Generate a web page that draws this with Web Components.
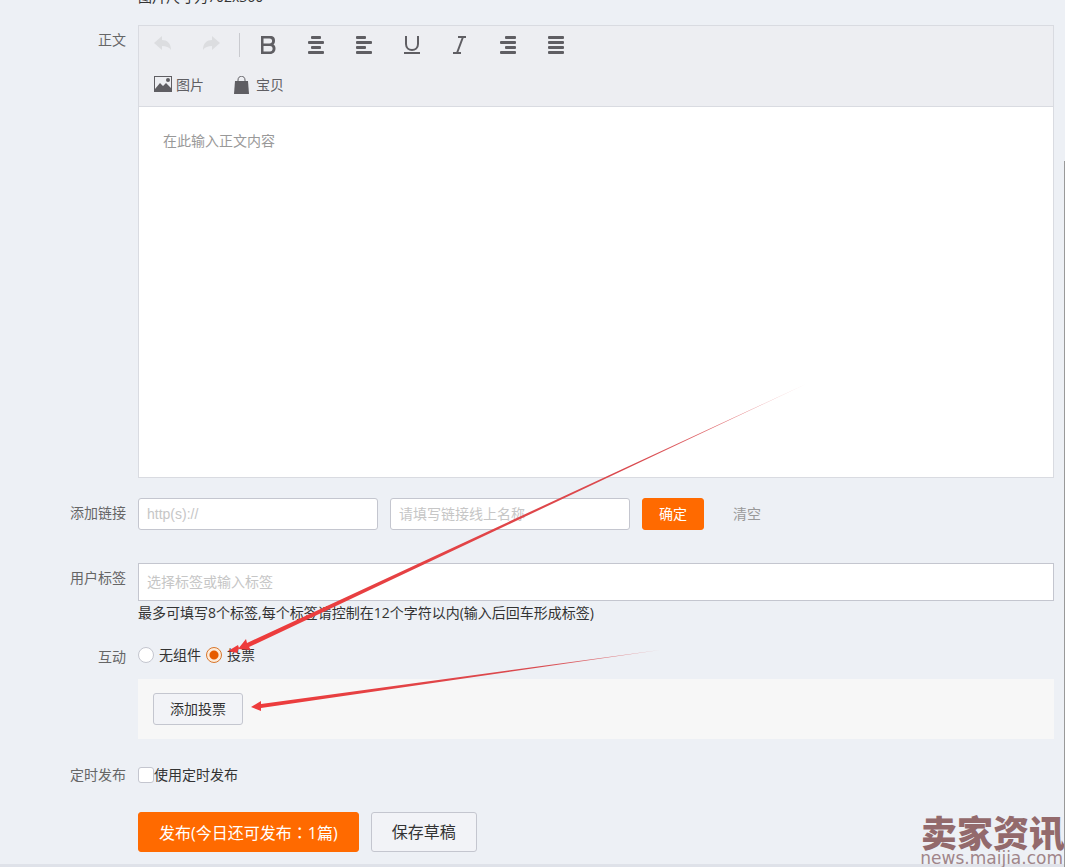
<!DOCTYPE html>
<html lang="zh-CN">
<head>
<meta charset="utf-8">
<title>发布文章</title>
<style>
html, body { margin: 0; min-height: 100%; }
body { background: #edf0f5; overflow: hidden; position: relative; color: #333; font: 14px/20px "Open Sans", "Noto Sans CJK SC", sans-serif; }
</style>
</head>
<body>
<publish-page></publish-page>
<script>
const define = (name, html, setup) => {
  const template = document.createElement('template');
  template.innerHTML = html;
  customElements.define(name, class extends HTMLElement {
    constructor() {
      super();
      this.attachShadow({ mode: 'open' }).append(template.content.cloneNode(true));
    }
    connectedCallback() { if (setup) setup(this, this.shadowRoot); }
  });
};

define('form-row', `
<style>
:host { display: grid; grid-template-columns: 126px minmax(0, 1fr); column-gap: 12px; align-items: start; }
.label { text-align: right; color: #666; padding-top: var(--label-top, 5px); }
</style>
<div class="label"></div>
<div><slot></slot></div>`, (host, root) => {
  root.querySelector('.label').textContent = host.getAttribute('label') || '';
});

const bars = rows => rows.map(([x, w], i) => `<rect x="${x}" y="${i * 5}" width="${w}" height="3" rx="1"/>`).join('');
const icons = {
  undo: '<path d="M0 7 8 0v4c5 0 9 3 9 10-2-3-5-4-9-4v4z"/>',
  redo: '<path d="M18 7 10 0v4c-5 0-9 3-9 10 2-3 5-4 9-4v4z"/>',
  bold: '<path fill-rule="evenodd" d="M2 0h9c4 0 5 2 5 4.500 0 2-.5 3-1.500 4 1.500 1 2 2 2 4 0 3-2 5.500-5.500 5.500H2zM4.500 2.500v5h6c3.500 0 3.500-5 0-5zM4.500 10v5.500h6.500c3.500 0 3.500-5.500 0-5.500z"/>',
  center: bars([[4, 10], [1, 16], [4, 10], [1, 16]]),
  left: bars([[1, 10], [1, 16], [1, 10], [1, 16]]),
  underline: '<path d="M3 0v8c0 8 12 8 12 0V0" fill="none" stroke="currentColor" stroke-width="2"/><rect x="1" y="16" width="16" height="2"/>',
  italic: '<path d="M7 1h8M2 17h8M12 1 6 17" fill="none" stroke="currentColor" stroke-width="2"/>',
  right: bars([[6, 11], [1, 16], [6, 11], [1, 16]]),
  justify: bars([[1, 16], [1, 16], [1, 16], [1, 16]]),
  image: '<path fill-rule="evenodd" d="M0 0h18v16H0zM1 1v12l5-6 3 3 3-3 5 5V1z"/><circle cx="14" cy="4" r="2"/>',
  bag: '<path d="M1 5h13l1 13H0z"/><path d="M4 7V4c0-5 7-5 7 0v3" fill="none" stroke="currentColor"/>'
};

define('tool-button', `
<style>
:host { display: block; }
button { display: flex; align-items: center; gap: 4px; border: 0; padding: 0; background: none; color: #5f5e63; font: inherit; }
button:disabled { color: #dcdde0; }
svg { width: 18px; height: 18px; fill: currentColor; display: block; }
</style>
<button type="button"><svg viewBox="0 0 18 18" aria-hidden="true"></svg><slot></slot></button>`, (host, root) => {
  root.querySelector('svg').innerHTML = icons[host.getAttribute('icon')];
  const button = root.querySelector('button');
  button.disabled = host.hasAttribute('disabled');
  if (host.title) button.setAttribute('aria-label', host.title);
});

define('rich-editor', `
<style>
:host { display: block; border: 1px solid #d9dbe1; background: #fff; }
.tools { background: #edeef2; border-bottom: 1px solid #d9dbe1; padding: 9px 15px 11px; display: flex; flex-direction: column; gap: 20px; }
.line { display: flex; align-items: center; height: 20px; gap: 30px; }
.sep { width: 1px; height: 24px; background: #c9cacf; margin: 0 -11px; }
textarea { display: block; box-sizing: border-box; width: 100%; height: 370px; border: 0; padding: 24px; resize: none; outline: 0; background: none; font: inherit; color: #333; }
textarea::placeholder { color: #999; opacity: 1; }
</style>
<div class="tools">
  <div class="line">
    <tool-button icon="undo" title="撤销" disabled></tool-button>
    <tool-button icon="redo" title="重做" disabled></tool-button>
    <span class="sep"></span>
    <tool-button icon="bold" title="加粗"></tool-button>
    <tool-button icon="center" title="居中"></tool-button>
    <tool-button icon="left" title="左对齐"></tool-button>
    <tool-button icon="underline" title="下划线"></tool-button>
    <tool-button icon="italic" title="斜体"></tool-button>
    <tool-button icon="right" title="右对齐"></tool-button>
    <tool-button icon="justify" title="两端对齐"></tool-button>
  </div>
  <div class="line">
    <tool-button icon="image">图片</tool-button>
    <tool-button icon="bag">宝贝</tool-button>
  </div>
</div>
<textarea aria-label="正文" placeholder="在此输入正文内容"></textarea>`);

define('text-field', `
<style>
:host { display: block; }
input { display: block; box-sizing: border-box; width: 100%; height: var(--field-height, 32px); border: 1px solid #c4c6cf; border-radius: var(--field-radius, 3px); padding: 0 8px; background: #fff; color: #333; font: 14px/20px "Liberation Sans", "Noto Sans CJK SC", sans-serif; outline: 0; }
input::placeholder { color: #c6c6c6; opacity: 1; }
</style>
<input type="text">`, (host, root) => {
  const input = root.querySelector('input');
  input.placeholder = host.getAttribute('placeholder');
  input.setAttribute('aria-label', host.getAttribute('name'));
});

define('ui-button', `
<style>
:host { display: block; }
button { display: block; box-sizing: border-box; height: 32px; padding: 0 16px; border: 1px solid #c4c6cf; border-radius: 3px; background: #f2f3f7; color: #333; font: inherit; white-space: nowrap; }
:host([kind="primary"]) button { background: #ff6a00; border-color: #ff6a00; color: #fff; }
:host([kind="text"]) button { background: none; border-color: transparent; color: #999; }
:host([size="large"]) button { height: 40px; padding: 0 20px; font-size: 16px; }
</style>
<button type="button"><slot></slot></button>`);

define('choice-item', `
<style>
:host { display: block; }
label { display: flex; align-items: center; gap: var(--choice-gap, 5px); color: #333; }
input { appearance: none; box-sizing: border-box; width: 16px; height: 16px; margin: 0; border: 1px solid #c4c6cf; border-radius: 3px; background: #fff; }
input[type="radio"] { border-radius: 50%; }
input[type="radio"]:checked { border-color: #d9762b; background: radial-gradient(circle, #e65c00 0 4px, #fdebd9 5px); }
</style>
<label><input><slot></slot></label>`, (host, root) => {
  const input = root.querySelector('input');
  input.type = host.getAttribute('type');
  input.checked = host.hasAttribute('checked');
});

define('site-mark', `
<style>
:host { display: block; color: #936a6c; text-align: right; white-space: nowrap; }
.name { font: 900 36px/36px "Noto Sans CJK SC", sans-serif; }
.site { font: 17px/18px "DejaVu Sans", sans-serif; color: #a08589; padding-right: 2px; }
</style>
<div class="name">卖家资讯</div>
<div class="site">news.maijia.com</div>`);

define('guide-arrows', `
<style>
:host { display: block; }
svg { display: block; }
</style>
<svg width="820" height="730" viewBox="0 0 820 730" aria-hidden="true">
  <defs>
    <linearGradient id="a" gradientUnits="userSpaceOnUse" x1="240" y1="648" x2="806" y2="384"><stop offset="0" stop-color="#ee3b3b"/><stop offset=".7" stop-color="#d94a4f"/><stop offset="1" stop-color="#d94a4f" stop-opacity=".6"/></linearGradient>
    <linearGradient id="b" gradientUnits="userSpaceOnUse" x1="250" y1="708" x2="660" y2="650"><stop offset="0" stop-color="#ee3b3b"/><stop offset=".7" stop-color="#d94a4f"/><stop offset="1" stop-color="#d94a4f" stop-opacity=".6"/></linearGradient>
  </defs>
  <path fill="#ee3b3b" d="M228 651 238 645 239 648 237 653z"/>
  <path fill="url(#a)" d="M238 649 246 639 247 643 806 384 249 647 251 650z"/>
  <path fill="url(#b)" d="M251 707 261 701 261 704 660 650 261 708 261 711z"/>
</svg>`);

define('publish-page', `
<style>
:host { display: block; padding-right: 11px; padding-bottom: 12px; border-bottom: 3px solid #dfe2e9; }
.hint { margin: -13px 0 18px 138px; }
.links { display: flex; gap: 12px; }
.links text-field { width: 240px; }
form-row { margin-bottom: 20px; }
.tags { --field-height: 38px; --field-radius: 0; }
.vote { background: #f7f7f7; padding: 14px 15px; margin-top: 14px; display: flex; }
.choices, .actions { display: flex; gap: 5px; }
.actions { gap: 12px; }
.colon { font-family: "Noto Sans CJK TC", sans-serif; }
site-mark { position: absolute; right: 0; bottom: 0; }
guide-arrows { position: absolute; left: 0; top: 0; pointer-events: none; }
.thumb { position: absolute; right: 0; top: 161px; bottom: 0; width: 1px; background: #999; }
</style>
<div class="hint">图片尺寸为702x360</div>
<form-row label="正文"><rich-editor></rich-editor></form-row>
<form-row label="添加链接" style="margin-bottom:33px">
  <div class="links">
    <text-field name="链接" placeholder="http(s)://"></text-field>
    <text-field name="链接名称" placeholder="请填写链接线上名称"></text-field>
    <ui-button kind="primary">确定</ui-button>
    <ui-button kind="text">清空</ui-button>
  </div>
</form-row>
<form-row label="用户标签">
  <text-field class="tags" name="用户标签" placeholder="选择标签或输入标签"></text-field>
  <div style="padding:2px 0">最多可填写8个标签,每个标签请控制在12个字符以内(输入后回车形成标签)</div>
</form-row>
<form-row label="互动" style="--label-top:2px; margin-bottom:26px">
  <div class="choices">
    <choice-item type="radio">无组件</choice-item>
    <choice-item type="radio" checked>投票</choice-item>
  </div>
  <div class="vote"><ui-button>添加投票</ui-button></div>
</form-row>
<form-row label="定时发布" style="--label-top:0px; --choice-gap:0px; margin-bottom:27px">
  <choice-item type="checkbox">使用定时发布</choice-item>
</form-row>
<form-row style="margin-bottom:0">
  <div class="actions">
    <ui-button kind="primary" size="large">发布(今日还可发布<span class="colon" lang="zh-Hant">：</span>1篇)</ui-button>
    <ui-button size="large">保存草稿</ui-button>
  </div>
</form-row>
<site-mark></site-mark>
<guide-arrows></guide-arrows>
<div class="thumb"></div>`);
</script>
</body>
</html>
